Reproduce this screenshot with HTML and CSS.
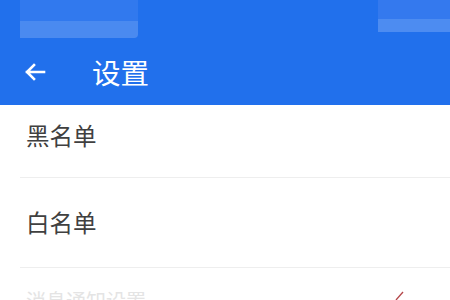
FILE: index.html
```html
<!DOCTYPE html>
<html lang="zh">
<head>
<meta charset="utf-8">
<link rel="stylesheet" href="styles.css">
</head>
<body>
<div class="page">
  <header class="header">
    <div class="statusbar">
      <div class="blur blur-left"></div>
      <div class="blur blur-right"></div>
    </div>
    <div class="toolbar">
      <svg class="back" width="22" height="20" viewBox="0 0 22 20">
        <path d="M20 10H3M10 3L3 10L10 17" fill="none" stroke="#fff" stroke-width="2.6" stroke-linecap="square"/>
      </svg>
      <span class="title">设置</span>
    </div>
  </header>
  <div class="list">
    <div class="row first"><span class="label">黑名单</span></div>
    <div class="row"><span class="label">白名单</span></div>
    <div class="row last">
      <span class="label faint">消息通知设置</span>
      <svg class="check" width="12" height="12" viewBox="0 0 12 12">
        <path d="M2 11L9 3" stroke="#b4474a" stroke-width="1.3" fill="none"/>
      </svg>
    </div>
  </div>
</div>
</body>
</html>
```

FILE: styles.css
```css
* { box-sizing: border-box; }
html, body { margin: 0; padding: 0; }
body {
  width: 450px;
  height: 300px;
  overflow: hidden;
  background: #fff;
  font-family: "Noto Sans CJK SC", "Noto Sans", sans-serif;
}
.page { width: 450px; height: 300px; overflow: hidden; }
.header { background: #2170ec; height: 105px; }
.statusbar {
  height: 40px;
  display: flex;
  justify-content: space-between;
  align-items: flex-start;
  padding-left: 20px;
}
.blur-left { width: 118px; height: 38px; background: linear-gradient(#3179ee 0 55%, #4a8af0 55% 100%); border-radius: 0 0 4px 0; }
.blur-right { width: 72px; height: 32px; background: linear-gradient(#3479ee 0 60%, #4d8cf1 60% 100%); }
.toolbar {
  height: 65px;
  display: flex;
  align-items: center;
  padding-left: 24px;
}
.back { display: block; margin-top: -2px; }
.title {
  color: #fff;
  font-size: 28.5px;
  line-height: 30px;
  margin-left: 46px;
  margin-top: -1px;
}
.list { padding-left: 20px; }
.row {
  display: flex;
  align-items: center;
  justify-content: space-between;
  height: 90px;
  padding: 0 0 0 6px;
  border-bottom: 1px solid #eeeeee;
}
.row.first { height: 73px; padding-bottom: 12px; }
.row .label {
  font-size: 23.5px;
  line-height: 24px;
  color: #404040;
}
.row:not(.first) .label { margin-top: -2px; }
.row.last { align-items: flex-start; padding-top: 23px; padding-right: 44px; border-bottom: none; }
.label.faint { color: #e4e4e4; font-size: 20px; }
.check { margin-top: -2px; }
```
